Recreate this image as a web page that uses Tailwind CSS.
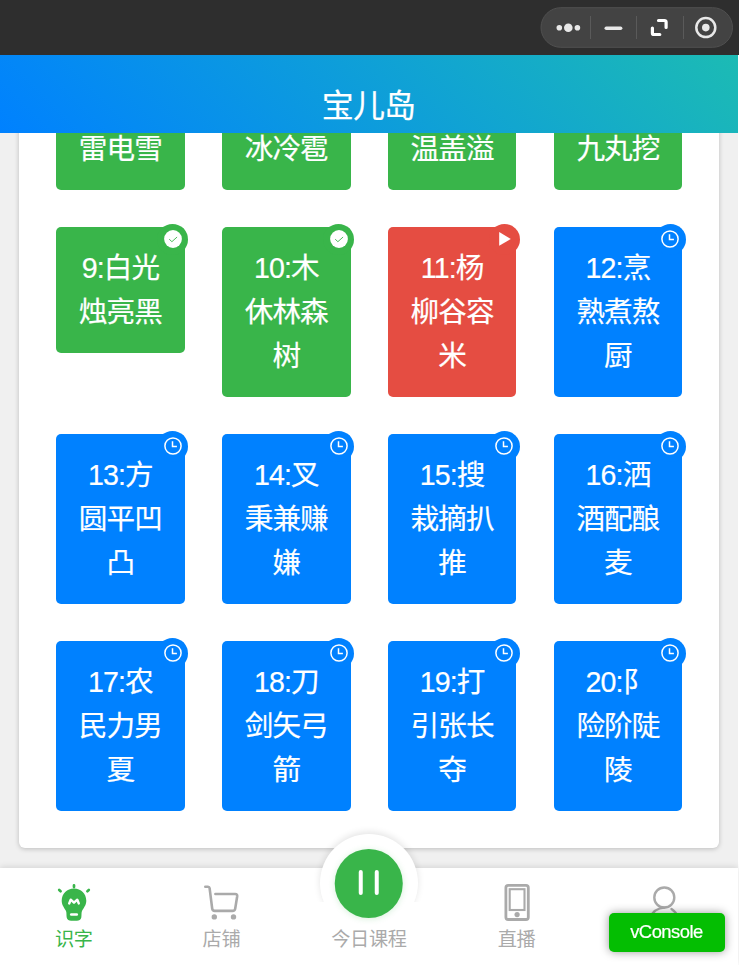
<!DOCTYPE html>
<html lang="zh-CN">
<head>
  <meta charset="UTF-8">
  <meta name="viewport" content="width=device-width, initial-scale=1.0">
  <title>宝儿岛</title>
  <script src="https://cdn.jsdelivr.net/npm/@tailwindcss/browser@4"></script>
</head>
<body class="w-[739px] h-[965px] overflow-hidden flex flex-col bg-white font-['Liberation_Sans','Noto_Sans_CJK_SC',sans-serif]">

  <!-- Window bar -->
  <div class="h-[55px] shrink-0 bg-[#2e2e2e] flex items-center justify-end pr-[6px]">
    <svg class="w-[193px] h-[41px]" viewBox="540 7 193 41" fill="none">
      <rect x="541" y="7.7" width="191.5" height="39.6" rx="19.8" fill="#434343" stroke="#505050"/>
      <path d="M590.5 16v23M636.5 16v23M683.5 16v23" stroke="#5a5a5a"/>
      <g fill="#e8e8e8">
        <circle cx="559.3" cy="27.7" r="2.8"/>
        <circle cx="568.3" cy="27.7" r="4.3"/>
        <circle cx="577.4" cy="27.7" r="2.8"/>
      </g>
      <path d="M606.3 28.2h14.3" stroke="#e8e8e8" stroke-width="3.6" stroke-linecap="round"/>
      <path d="M658.5 20.5h6a1.600 1.600 0 0 1 1.600 1.600v5.400M652.400 28v4.900a1.600 1.600 0 0 0 1.600 1.600h5.800" stroke="#fff" stroke-width="3.2" stroke-linecap="round"/>
      <circle cx="705.8" cy="27.6" r="9.5" stroke="#e8e8e8" stroke-width="2.5"/>
      <circle cx="705.8" cy="27.6" r="3.8" fill="#e8e8e8"/>
    </svg>
  </div>

  <!-- Page title -->
  <header class="w-[738px] h-[78px] shrink-0 relative z-10 flex justify-center pt-[25px] pr-[1px] bg-[linear-gradient(45deg,#0081ff,#1cbbb4)] text-white text-[32px] leading-[52px] tracking-[-0.8px] [-webkit-text-stroke:0.2px_white]">
    <h1>宝儿岛</h1>
  </header>

  <!-- Lessons -->
  <main class="w-[738px] h-[734.5px] shrink-0 overflow-hidden flex flex-col justify-end px-[18.75px] pb-[19.5px] bg-[#f0f0f0]">
    <section id="lessons" class="shrink-0 grid grid-cols-4 items-start gap-x-[37.3px] gap-y-[37px] pl-[37.4px] pr-[37px] py-[37.2px] rounded-[6px] bg-white shadow-[0_1px_5px_rgba(0,0,0,0.22)]"></section>
  </main>

  <!-- Tab bar -->
  <nav class="w-[738px] flex-1 relative grid grid-cols-5 bg-white shadow-[0_-1px_6px_rgba(0,0,0,0.12)] text-[#aaa] text-[19.2px] tracking-[-0.3px] text-center">
    <a class="flex flex-col items-center pt-[14.5px] text-[#39b54a]">
      <svg class="w-[40px] h-[40px]" viewBox="54 882 40 40" fill="none">
        <path d="M74 888.6c-7 0-12.3 5.3-12.3 12.1 0 4.5 2.7 7.1 4.2 10.1.8 1.400.4 4.600.8 6.600.5 2.300 2.300 3.300 4.400 3.300h5.800c2.100 0 3.900-1 4.400-3.300.4-2 0-5.200.8-6.600 1.500-3 4.200-5.600 4.200-10.100 0-6.800-5.300-12.100-12.300-12.100z" fill="#39b54a"/>
        <path d="M74 885.3v1.8M59.2 890l1.400 1.200M88.800 890l-1.400 1.200" stroke="#39b54a" stroke-width="2.7" stroke-linecap="round"/>
        <path d="M69.200 903.500l1.500-3.800 3.300 3 3.300-3 1.500 3.800" stroke="#fff" stroke-width="2.4" stroke-linecap="round" stroke-linejoin="round"/>
        <path d="M71.200 914.500h5.600" stroke="#fff" stroke-width="2.5" stroke-linecap="round"/>
      </svg>
      <span class="mt-[2px] leading-[32px]">识字</span>
    </a>
    <a class="flex flex-col items-center pt-[14.5px]">
      <svg class="w-[40px] h-[40px]" viewBox="201.5 882 40 40" fill="none" stroke="#aaa" stroke-width="2.6" stroke-linecap="round" stroke-linejoin="round">
        <path d="M205.800 886.700h2.700q1.400 0 1.600 1.500l2.600 20.400q.3 2.300 2.500 2.300h17.800q2.400 0 2.700-2.300l2-12.400q.3-2.200-2-2.200h-19.800"/>
        <circle cx="214.800" cy="916.900" r="2.700" fill="#aaa" stroke="none"/>
        <circle cx="234" cy="916.900" r="2.700" fill="#aaa" stroke="none"/>
      </svg>
      <span class="mt-[2px] leading-[32px]">店铺</span>
    </a>
    <a class="relative flex flex-col items-center pt-[56.5px]">
      <!-- raised button; the halo is cut off part way down -->
      <div class="absolute -top-[48px] left-1/2 -translate-x-1/2 w-[130px] h-[82px] overflow-hidden">
        <div class="mx-auto mt-[14px] size-[98px] rounded-full bg-white shadow-[0_-2px_7px_rgba(0,0,0,0.11)]"></div>
      </div>
      <div class="absolute -top-[18.5px] left-1/2 -translate-x-1/2 size-[68.5px] rounded-full bg-[#39b54a] shadow-[0_1px_6px_rgba(57,181,74,0.2)] flex items-center justify-center gap-[11.5px]">
        <i class="w-[4px] h-[25px] -mt-[2px] rounded-full bg-white"></i>
        <i class="w-[4px] h-[25px] -mt-[2px] rounded-full bg-white"></i>
      </div>
      <span class="leading-[32px]">今日课程</span>
    </a>
    <a class="flex flex-col items-center pt-[14.5px]">
      <svg class="w-[40px] h-[40px]" viewBox="496.5 882 40 40" fill="none" stroke="#aaa">
        <rect x="505.400" y="885.300" width="22.400" height="34.200" rx="2.300" stroke-width="2.800"/>
        <rect x="509.200" y="889.200" width="14.800" height="20.800" stroke-width="2.100"/>
        <circle cx="516.600" cy="914.600" r="2.600" fill="#aaa" stroke="none"/>
      </svg>
      <span class="mt-[2px] leading-[32px]">直播</span>
    </a>
    <a class="flex flex-col items-center pt-[14.5px]" aria-label="我的">
      <svg class="w-[40px] h-[40px]" viewBox="644 882 40 40" fill="none" stroke="#aaa" stroke-width="2.4" stroke-linecap="round">
        <circle cx="664.300" cy="897.500" r="10"/>
        <path d="M650.500 917q3.500-8.500 13.800-9.400M671.500 909q4.500 2.800 6.500 8"/>
      </svg>
    </a>
  </nav>

  <button class="fixed left-[609px] top-[913px] w-[116px] h-[39px] rounded-[5px] bg-[#04be02] text-white text-[18.4px] tracking-[-0.5px] leading-[37px] pb-[2px] pr-[1px] shadow-[0_0_10px_rgba(0,0,0,0.4)] [-webkit-text-stroke:0.2px_white]">vConsole</button>

  <script>
    const icons = {
      done: '<circle cx="9" cy="9" r="8.9" fill="#fff"/><path d="M5.2 9.2l2.700 2.500 5.200-4.700" stroke="#39b54a" stroke-width=".9"/>',
      play: '<path d="M4.200 2v13.800l11.600-6.900z" fill="#fff"/>',
      wait: '<circle cx="9" cy="9" r="8.100" stroke="#fff" stroke-width="1.500"/><path d="M8.500 4.200v5.200h4.400" stroke="#fff" stroke-width="1.500"/>',
    };
    const colors = {
      done: 'bg-[#39b54a]',
      play: 'bg-[#e54d42]',
      wait: 'bg-[#0081ff]',
    };

    const lessons = [
      ['done', '雷电雪'],
      ['done', '冰冷雹'],
      ['done', '温盖溢'],
      ['done', '九丸挖'],
      ['done', '9:白光\n烛亮黑'],
      ['done', '10:木\n休林森\n树'],
      ['play', '11:杨\n柳谷容\n米'],
      ['wait', '12:烹\n熟煮熬\n厨'],
      ['wait', '13:方\n圆平凹\n凸'],
      ['wait', '14:叉\n秉兼赚\n嫌'],
      ['wait', '15:搜\n栽摘扒\n推'],
      ['wait', '16:洒\n酒配酿\n麦'],
      ['wait', '17:农\n民力男\n夏'],
      ['wait', '18:刀\n剑矢弓\n箭'],
      ['wait', '19:打\n引张长\n夺'],
      ['wait', '20:阝\n险阶陡\n陵'],
    ];

    document.getElementById('lessons').innerHTML = lessons.map(([state, text]) => `
      <div class="relative rounded-[5px] px-2 pt-[19px] pb-[18.5px] text-center text-white text-[28.6px] leading-[44.17px] tracking-[-0.9px] [-webkit-text-stroke:0.2px_white] whitespace-pre-line ${colors[state]}">${text}<span class="absolute -top-[3px] -right-[3.5px] size-[31px] rounded-full flex items-center justify-center ${colors[state]}"><svg class="size-[18px]" viewBox="0 0 18 18" fill="none">${icons[state]}</svg></span></div>`).join('');
  </script>
</body>
</html>
